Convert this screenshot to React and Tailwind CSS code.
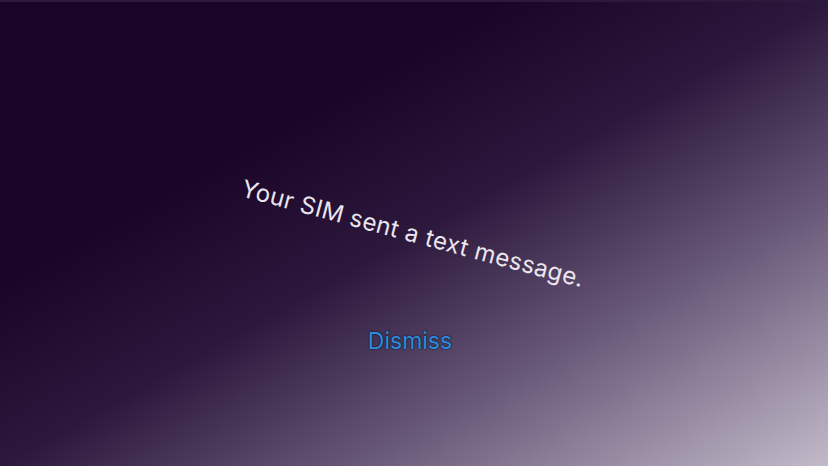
import React from 'react'

const SimNotice = () => {
    return (
        <div
            className='w-[828px] h-[466px] overflow-hidden flex flex-col items-center border-t-2 border-[#2b1a3a] bg-[linear-gradient(to_bottom_right,#1a0526_0%,#1a0527_30%,#2c183c_50%,#6a5a7a_72%,#c2bac9_100%)]'
            style={{ fontFamily: 'Inter, "Noto Sans", sans-serif' }}
        >
            <p className='mt-[218px] h-[28px] leading-[28px] text-[24px] text-[#ebe6ee] rotate-[15deg] whitespace-nowrap tracking-[0.35px] ml-[-2px]'>
                Your SIM sent a text message.
            </p>
            <button className='mt-[79px] h-[28px] leading-[28px] text-[23px] text-[#318bdc] ml-[-8px] [text-shadow:0_0_1px_#071528,0_0_2px_#0b1a30]'>
                Dismiss
            </button>
        </div>
    )
}

export default function App() {
    return <SimNotice />
}
